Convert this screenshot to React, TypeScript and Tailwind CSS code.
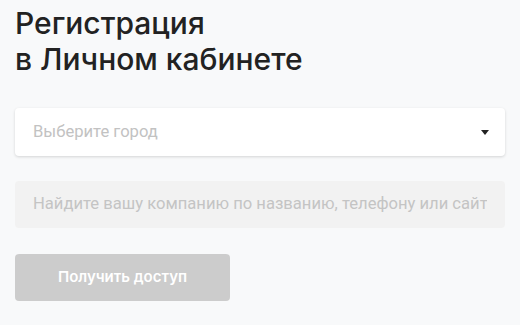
import React from 'react';

export default function App() {
  return (
    <div
      className="min-h-[325px] w-[520px] bg-[#f8f9fa] px-[15px] pt-[5px]"
      style={{ fontFamily: 'Inter, "Noto Sans", sans-serif' }}
    >
      <h1 className="text-[30px] font-medium leading-[36px] text-[#222222]">
        Регистрация
        <br />в Личном кабинете
      </h1>

      {/* City select */}
      <div className="mt-[31px] flex h-[48px] w-[490px] items-center justify-between rounded-[4px] bg-white pl-[18px] pr-[14px] shadow-[0_1px_3px_rgba(0,0,0,0.15)]">
        <span className="text-[16.6px] text-[#c2c2c2]" style={{ fontFamily: 'Roboto, sans-serif' }}>
          Выберите город
        </span>
        <svg width="8" height="5" viewBox="0 0 8 5" className="mr-[2px]">
          <path d="M0 0h8L4 5z" fill="#222" />
        </svg>
      </div>

      {/* Company search */}
      <div className="mt-[25px] flex h-[47px] w-[490px] items-center overflow-hidden rounded-[4px] bg-[#f2f2f2] pl-[18px] pr-[18px]">
        <span
          className="overflow-hidden whitespace-nowrap text-[16.6px] text-[#c4c4c4]"
          style={{ fontFamily: 'Roboto, sans-serif' }}
        >
          Найдите вашу компанию по названию, телефону или сайту
        </span>
      </div>

      {/* Submit */}
      <button className="mt-[26px] flex h-[47px] w-[215px] items-center justify-center rounded-[4px] bg-[#cccccc] text-[15px] font-semibold text-white">
        Получить доступ
      </button>
    </div>
  );
}
